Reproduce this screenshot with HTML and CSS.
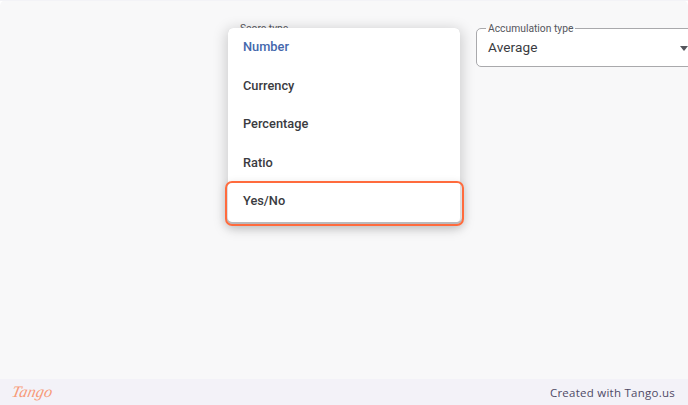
FILE: index.html
```html
<!DOCTYPE html>
<html lang="en">
<head>
<meta charset="utf-8">
<title>Score type</title>
<link rel="stylesheet" href="styles.css">
</head>
<body>
<div class="screen">
  <main class="content">
    <div class="fields">
      <div class="field score">
        <span class="label">Score type</span>
      </div>
      <div class="field accumulation">
        <span class="label">Accumulation type</span>
        <span class="value">Average</span>
        <span class="caret"></span>
      </div>
    </div>
    <ul class="menu">
      <li class="option selected">Number</li>
      <li class="option">Currency</li>
      <li class="option">Percentage</li>
      <li class="option">Ratio</li>
      <li class="option">Yes/No</li>
    </ul>
    <div class="highlight"></div>
  </main>
  <footer class="footer">
    <span class="logo">Tango</span>
    <span class="credit">Created with Tango.us</span>
  </footer>
</div>
</body>
</html>
```
FILE: styles.css
```css
* { box-sizing: border-box; }
html, body { margin: 0; height: 100%; }
body { background: #fff; font-family: Roboto, "Liberation Sans", sans-serif; overflow: hidden; }
.screen { width: 688px; height: 405px; display: flex; flex-direction: column; background: #f8f8f9; border-radius: 6px 6px 0 0; }
.content { position: relative; flex: 1; overflow: hidden; border-top: 1px solid #f3f3f7; }
.fields { display: flex; gap: 16px; padding: 27px 0 0 228px; }
.field { position: relative; height: 39px; border: 1px solid #a9a9ac; border-radius: 5px; background: #fff; flex: none; }
.field.score { width: 232px; }
.field.accumulation { width: 240px; padding: 9px 0 0 11px; }
.label { position: absolute; top: -6px; left: 9px; padding: 0 2px; background: linear-gradient(#f8f8f9 50%, #fff 50%); font-size: 10.3px; line-height: 12px; color: #55565c; white-space: nowrap; }
.value { display: block; font-size: 13.6px; line-height: 18px; color: #3a3b40; letter-spacing: .1px; }
.caret { position: absolute; top: 17px; left: 203px; width: 0; height: 0; border: 4px solid transparent; border-top: 5px solid #55565c; border-bottom: 0; }
.menu { position: absolute; top: 27px; left: 228px; width: 232px; height: 195px; margin: 0; padding: 0; list-style: none; background: #fff; border-radius: 5px; box-shadow: 0 3px 14px 2px rgba(0,0,0,.18); }
.option { height: 38.6px; padding-left: 15px; font-size: 12.8px; font-weight: 500; line-height: 38.6px; color: #3a3b41; }
.option.selected { color: #4468ad; }
.highlight { position: absolute; top: 180px; left: 225px; width: 239px; height: 45px; border: 2px solid #ff6b3d; border-radius: 7px; box-shadow: inset 0 -2px 0 #b9b9bc, 0 2px 8px rgba(0,0,0,.12); }
.footer { flex: none; height: 26px; display: flex; align-items: center; justify-content: space-between; padding: 0 13px 0 12px; background: #f3f2f8; }
.logo { font-family: "Liberation Serif", serif; font-style: italic; font-size: 16px; color: #f79a78; letter-spacing: .2px; transform: skewX(-12deg); }
.credit { font-family: "Open Sans", sans-serif; font-size: 11.5px; color: #4f4a66; letter-spacing: .25px; }
```
